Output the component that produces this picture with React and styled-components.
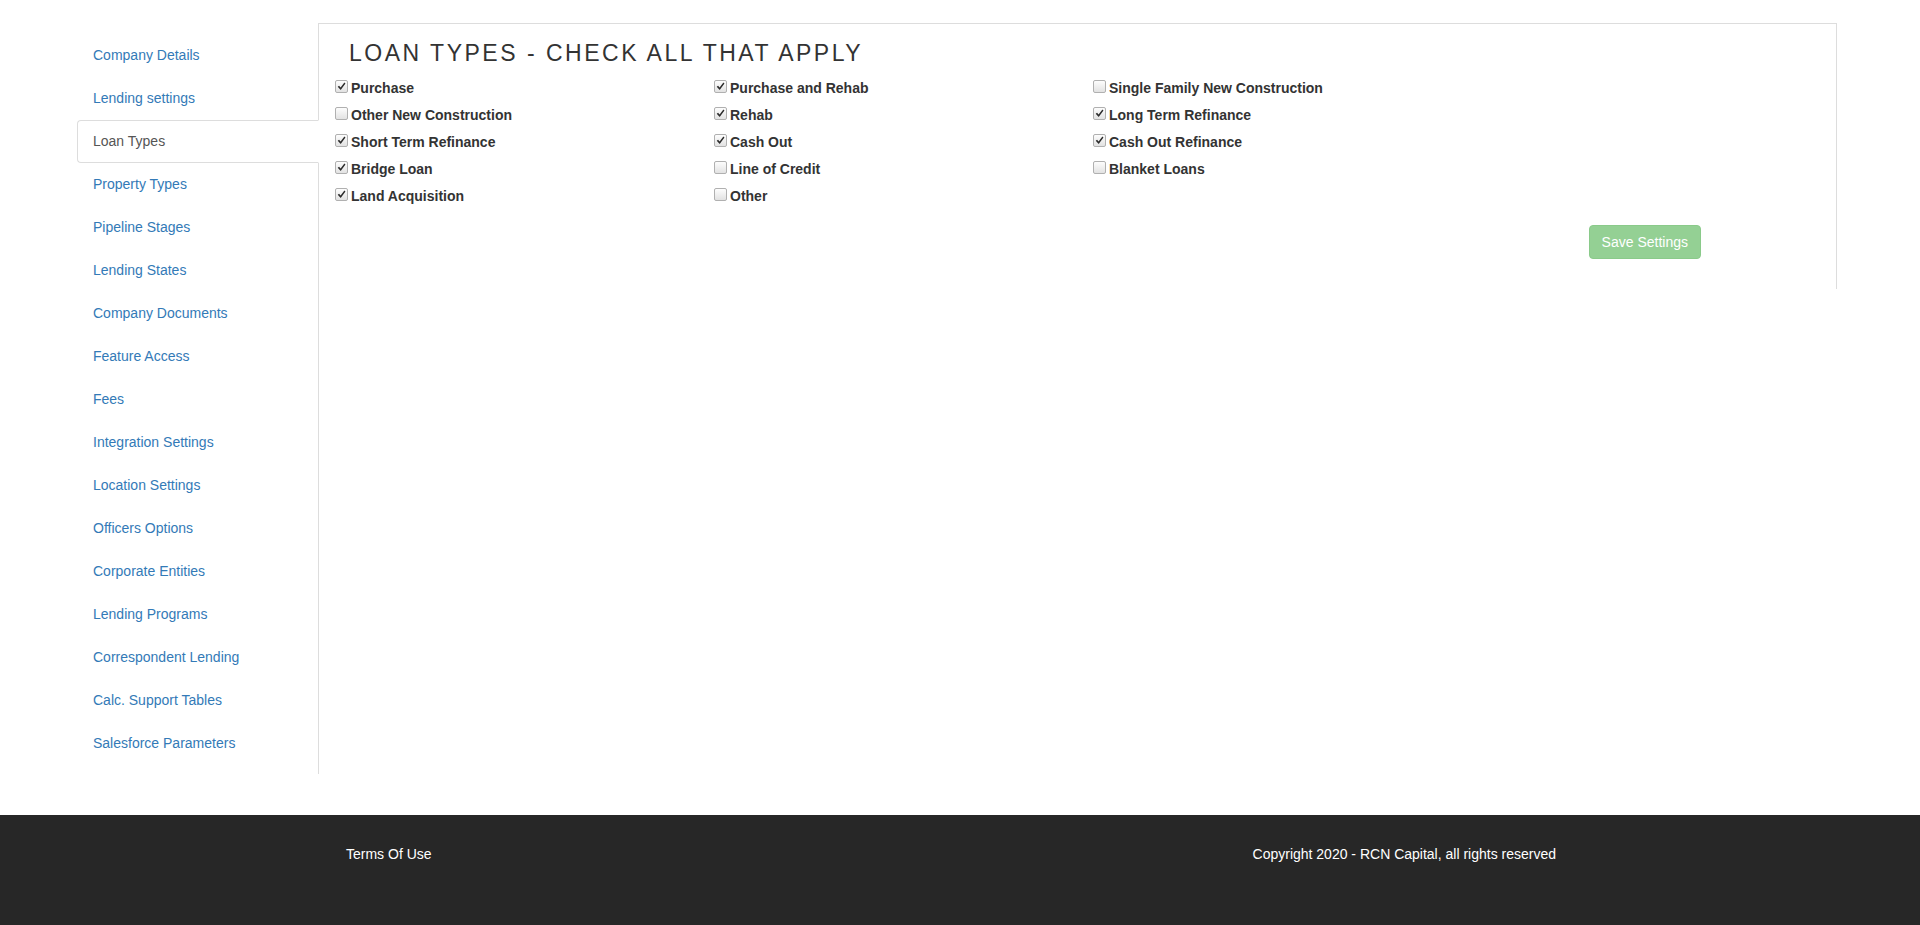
import React, { useState } from "react";
import styled, { createGlobalStyle } from "styled-components";

const GlobalStyle = createGlobalStyle`
  html {
    overflow-y: scroll;
  }
  ::-webkit-scrollbar {
    width: 17px;
    background: #f1f1f1;
  }
  ::-webkit-scrollbar-track {
    border-left: 2px solid #f1f1f1;
    border-right: 2px solid #f1f1f1;
    background: linear-gradient(
      #f1f1f1 0,
      #f1f1f1 126px,
      #c1c1c1 126px,
      #c1c1c1 908px,
      #f1f1f1 908px
    );
  }
  body {
    margin: 0;
    font-family: "Liberation Sans", Arial, Helvetica, sans-serif;
    font-size: 14px;
    line-height: 1.42857;
    color: #333;
    background: #fff;
  }
  * {
    box-sizing: border-box;
  }
`;

const Page = styled.div`
  display: flex;
  flex-direction: column;
  min-height: 100vh;
`;

const Main = styled.div`
  display: flex;
  align-items: flex-start;
  padding-top: 23px;
  flex: 1;
`;

const Sidebar = styled.div`
  width: 319px;
  flex-shrink: 0;
  padding-left: 77px;
`;

const NavList = styled.ul`
  list-style: none;
  margin: 0;
  padding: 11px 0 9px;
  border-right: 1px solid #ddd;
`;

const NavLink = styled.a`
  display: block;
  padding: 10px 15px;
  line-height: 21px;
  margin-right: -1px;
  border: 1px solid ${p => (p.$active ? "#ddd" : "transparent")};
  border-right-color: ${p => (p.$active ? "#fff" : "transparent")};
  border-radius: 4px 0 0 4px;
  background: ${p => (p.$active ? "#fff" : "transparent")};
  color: ${p => (p.$active ? "#555" : "#337ab7")};
  text-decoration: none;
  cursor: pointer;

  &:hover {
    text-decoration: ${p => (p.$active ? "none" : "underline")};
    color: ${p => (p.$active ? "#555" : "#23527c")};
  }
`;

const Panel = styled.section`
  width: 1518px;
  border-top: 1px solid #ddd;
  border-right: 1px solid #ddd;
  padding-bottom: 30px;
`;

const Title = styled.h3`
  margin: 17px 0 12px 30px;
  font-size: 23px;
  line-height: 1.1;
  font-weight: 400;
  letter-spacing: 2.5px;
  color: #333;
`;

const OptionGrid = styled.div`
  display: grid;
  grid-template-columns: repeat(3, 379px);
  row-gap: 7px;
  padding-left: 16px;
`;

const Option = styled.label`
  display: flex;
  align-items: flex-start;
  height: 20px;
  font-weight: 700;
  line-height: 20px;
  cursor: pointer;
  user-select: none;
`;

const Box = styled.span`
  width: 13px;
  height: 13px;
  margin: 2px 3px 0 0;
  flex-shrink: 0;
  display: flex;
  align-items: center;
  justify-content: center;
  border: 1px solid #b0b0b0;
  border-radius: 2px;
  background: linear-gradient(#fdfdfd, #e2e2e2);
`;

const HiddenInput = styled.input`
  position: absolute;
  opacity: 0;
  width: 0;
  height: 0;
  margin: 0;
`;

const Actions = styled.div`
  display: flex;
  justify-content: flex-end;
  padding: 19px 135px 0 0;
`;

const SaveButton = styled.button`
  font-family: inherit;
  font-size: 14px;
  line-height: 20px;
  padding: 6px 12px;
  color: #fff;
  background: #5cb85c;
  border: 1px solid #4cae4c;
  border-radius: 4px;
  opacity: 0.65;
  cursor: not-allowed;
`;

const Footer = styled.footer`
  height: 110px;
  background: #272727;
  color: #fff;
  padding-top: 29px;
`;

const FooterInner = styled.div`
  width: 1240px;
  margin-left: 331px;
  padding: 0 15px;
  display: grid;
  grid-template-columns: 1fr 1fr;
  line-height: 20px;
`;

const FooterLink = styled.a`
  color: #fff;
  text-decoration: none;
  cursor: pointer;
`;

const Copyright = styled.div`
  text-align: right;
`;

const navItems = [
  "Company Details",
  "Lending settings",
  "Loan Types",
  "Property Types",
  "Pipeline Stages",
  "Lending States",
  "Company Documents",
  "Feature Access",
  "Fees",
  "Integration Settings",
  "Location Settings",
  "Officers Options",
  "Corporate Entities",
  "Lending Programs",
  "Correspondent Lending",
  "Calc. Support Tables",
  "Salesforce Parameters"
];

const loanTypes = [
  { name: "Purchase", checked: true },
  { name: "Purchase and Rehab", checked: true },
  { name: "Single Family New Construction", checked: false },
  { name: "Other New Construction", checked: false },
  { name: "Rehab", checked: true },
  { name: "Long Term Refinance", checked: true },
  { name: "Short Term Refinance", checked: true },
  { name: "Cash Out", checked: true },
  { name: "Cash Out Refinance", checked: true },
  { name: "Bridge Loan", checked: true },
  { name: "Line of Credit", checked: false },
  { name: "Blanket Loans", checked: false },
  { name: "Land Acquisition", checked: true },
  { name: "Other", checked: false }
];

const CheckMark = () => (
  <svg width="9" height="9" viewBox="0 0 10 10">
    <path d="M0.8 5.4 L2.3 4.2 L4 6.2 L8.2 0.6 L9.4 1.6 L4.1 9 Z" fill="#2b2b2b" />
  </svg>
);

const App = () => {
  const [active, setActive] = useState("Loan Types");
  const [checked, setChecked] = useState(
    loanTypes.reduce((acc, t) => ({ ...acc, [t.name]: t.checked }), {})
  );

  const toggle = name => setChecked({ ...checked, [name]: !checked[name] });

  return (
    <Page>
      <GlobalStyle />
      <Main>
        <Sidebar>
          <NavList>
            {navItems.map(item => (
              <li key={item}>
                <NavLink $active={item === active} onClick={() => setActive(item)}>
                  {item}
                </NavLink>
              </li>
            ))}
          </NavList>
        </Sidebar>

        <Panel>
          <Title>LOAN TYPES - CHECK ALL THAT APPLY</Title>
          <OptionGrid>
            {loanTypes.map(t => (
              <Option key={t.name}>
                <HiddenInput
                  type="checkbox"
                  checked={checked[t.name]}
                  onChange={() => toggle(t.name)}
                />
                <Box>{checked[t.name] && <CheckMark />}</Box>
                {t.name}
              </Option>
            ))}
          </OptionGrid>
          <Actions>
            <SaveButton disabled>Save Settings</SaveButton>
          </Actions>
        </Panel>
      </Main>

      <Footer>
        <FooterInner>
          <div>
            <FooterLink>Terms Of Use</FooterLink>
          </div>
          <Copyright>Copyright 2020 - RCN Capital, all rights reserved</Copyright>
        </FooterInner>
      </Footer>
    </Page>
  );
};

export default App;
